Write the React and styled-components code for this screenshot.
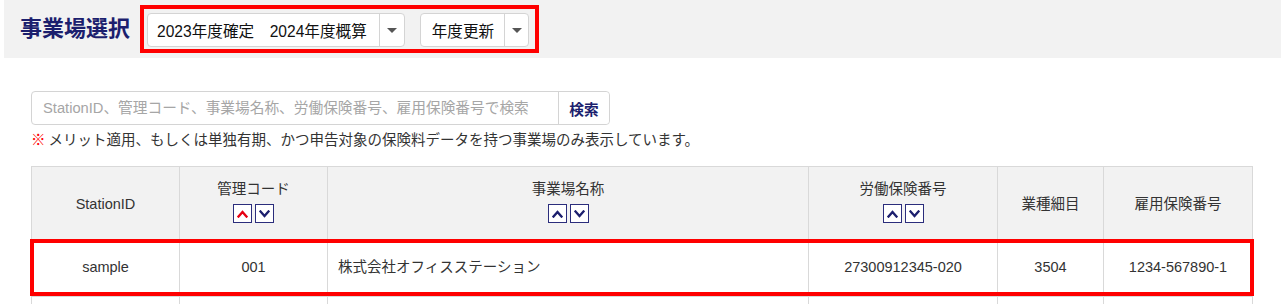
import React from "react";
import styled, { createGlobalStyle } from "styled-components";

const Global = createGlobalStyle`
  html, body { margin: 0; padding: 0; background: #fff; }
  body {
    font-family: "Liberation Sans", "Noto Sans CJK JP", sans-serif;
    color: #333;
  }
  * { box-sizing: border-box; }
`;

const Page = styled.div`
  width: 1281px;
  height: 304px;
  overflow: hidden;
`;

const Band = styled.div`
  margin-left: 4px;
  height: 58px;
  background: #f2f2f2;
  display: flex;
  align-items: center;
  padding-left: 16px;
`;

const Title = styled.h1`
  margin: 0 10px 0 0;
  font-size: 22px;
  line-height: 28px;
  font-weight: 700;
  color: #1c1f6e;
`;

const Annotated = styled.div`
  display: flex;
  align-items: flex-start;
  gap: 15px;
  height: 48px;
  border: 4px solid #ff0000;
  padding: 4px 6px 0 3px;
`;

const Select = styled.div`
  display: flex;
  height: 34px;
  background: #fff;
  border: 1px solid #d4d4d4;
  border-radius: 4px;
`;

const SelectValue = styled.div`
  display: flex;
  align-items: center;
  padding: 0 ${(p) => p.$pr || 10}px 0 ${(p) => p.$pl || 9}px;
  font-size: 15.6px;
  color: #111;
  white-space: pre;
`;

const SelectArrow = styled.div`
  width: ${(p) => p.$w || 25}px;
  border-left: 1px solid #d4d4d4;
  display: flex;
  align-items: center;
  justify-content: center;
  &::after {
    content: "";
    border-left: 5px solid transparent;
    border-right: 5px solid transparent;
    border-top: 5px solid #555;
  }
`;

const SearchBar = styled.div`
  margin: 33px 0 0 31px;
  display: flex;
  width: 579px;
  height: 34px;
  border: 1px solid #d4d4d4;
  border-radius: 4px;
`;

const SearchInput = styled.input`
  flex: 1;
  min-width: 0;
  border: none;
  outline: none;
  background: transparent;
  padding: 0 0 0 11px;
  font-family: inherit;
  font-size: 14.7px;
  color: #333;
  &::placeholder { color: #a6a6a6; }
`;

const SearchButton = styled.button`
  width: 51px;
  flex: none;
  border: none;
  border-left: 1px solid #d4d4d4;
  background: #fff;
  font-family: inherit;
  font-size: 14.7px;
  font-weight: 700;
  color: #1c1f6e;
  padding: 0;
  border-radius: 0 4px 4px 0;
`;

const Notice = styled.p`
  margin: 6px 0 0 31px;
  font-size: 14.5px;
  line-height: 18px;
  color: #333;
  white-space: nowrap;
`;

const Mark = styled.span`
  color: #ff0000;
  font-weight: 700;
  margin-right: 3px;
`;

const TableWrap = styled.div`
  position: relative;
  margin: 17px 0 0 31px;
  width: 1221px;
`;

const Table = styled.table`
  border-collapse: collapse;
  table-layout: fixed;
  width: 1221px;
  font-size: 14.5px;
`;

const Th = styled.th`
  height: 74px;
  background: #f2f2f2;
  border: 1px solid #d9d9d9;
  font-weight: 400;
  color: #333;
  text-align: center;
  vertical-align: middle;
  padding: 0;
  line-height: 18px;
`;

const Td = styled.td`
  height: ${(p) => p.$h || 56}px;
  border: 1px solid #d9d9d9;
  background: #fff;
  color: #333;
  text-align: ${(p) => (p.$left ? "left" : "center")};
  padding: ${(p) => (p.$left ? "0 0 4px 10px" : "0 0 4px 0")};
  vertical-align: middle;
  line-height: 18px;
  white-space: nowrap;
`;

const HeadLabel = styled.div`
  margin-top: -4px;
`;

const SortRow = styled.div`
  display: flex;
  justify-content: center;
  gap: 3px;
  margin-top: 6px;
`;

const SortButton = styled.button`
  width: 19px;
  height: 19px;
  padding: 0;
  border: 1px solid #2b2d7c;
  background: #fff;
  display: flex;
  align-items: center;
  justify-content: center;
  color: ${(p) => (p.$active ? "#e60012" : "#1c1f6e")};
`;

const RowHighlight = styled.div`
  position: absolute;
  left: -1px;
  top: 73px;
  width: 1224px;
  height: 57px;
  border: 4px solid #ff0000;
  pointer-events: none;
`;

const Chevron = ({ up }) => (
  <svg width="11" height="8" viewBox="0 0 11 8" fill="none">
    <path
      d={up ? "M1.5 6.5 L5.5 2 L9.5 6.5" : "M1.5 1.5 L5.5 6 L9.5 1.5"}
      stroke="currentColor"
      strokeWidth="2.4"
      strokeLinecap="square"
    />
  </svg>
);

const Sort = ({ active }) => (
  <SortRow>
    <SortButton $active={active === "up"}>
      <Chevron up />
    </SortButton>
    <SortButton $active={active === "down"}>
      <Chevron />
    </SortButton>
  </SortRow>
);

const cols = [148, 148, 481, 189, 106, 149];

export default function App() {
  return (
    <Page>
      <Global />
      <Band>
        <Title>事業場選択</Title>
        <Annotated>
          <Select>
            <SelectValue $pl={9} $pr={12}>2023年度確定　2024年度概算</SelectValue>
            <SelectArrow $w={25} />
          </Select>
          <Select>
            <SelectValue $pl={11} $pr={10}>年度更新</SelectValue>
            <SelectArrow $w={24} />
          </Select>
        </Annotated>
      </Band>

      <SearchBar>
        <SearchInput placeholder="StationID、管理コード、事業場名称、労働保険番号、雇用保険番号で検索" />
        <SearchButton>検索</SearchButton>
      </SearchBar>
      <Notice>
        <Mark>※</Mark>メリット適用、もしくは単独有期、かつ申告対象の保険料データを持つ事業場のみ表示しています。
      </Notice>

      <TableWrap>
        <Table>
          <colgroup>
            {cols.map((w, i) => (
              <col key={i} style={{ width: w }} />
            ))}
          </colgroup>
          <thead>
            <tr>
              <Th>StationID</Th>
              <Th>
                <HeadLabel>管理コード</HeadLabel>
                <Sort active="up" />
              </Th>
              <Th>
                <HeadLabel>事業場名称</HeadLabel>
                <Sort />
              </Th>
              <Th>
                <HeadLabel>労働保険番号</HeadLabel>
                <Sort />
              </Th>
              <Th>業種細目</Th>
              <Th>雇用保険番号</Th>
            </tr>
          </thead>
          <tbody>
            <tr>
              <Td>sample</Td>
              <Td>001</Td>
              <Td $left>株式会社オフィスステーション</Td>
              <Td>27300912345-020</Td>
              <Td>3504</Td>
              <Td>1234-567890-1</Td>
            </tr>
            <tr>
              {cols.map((_, i) => (
                <Td key={i} $left={i === 2} />
              ))}
            </tr>
          </tbody>
        </Table>
        <RowHighlight />
      </TableWrap>
    </Page>
  );
}
